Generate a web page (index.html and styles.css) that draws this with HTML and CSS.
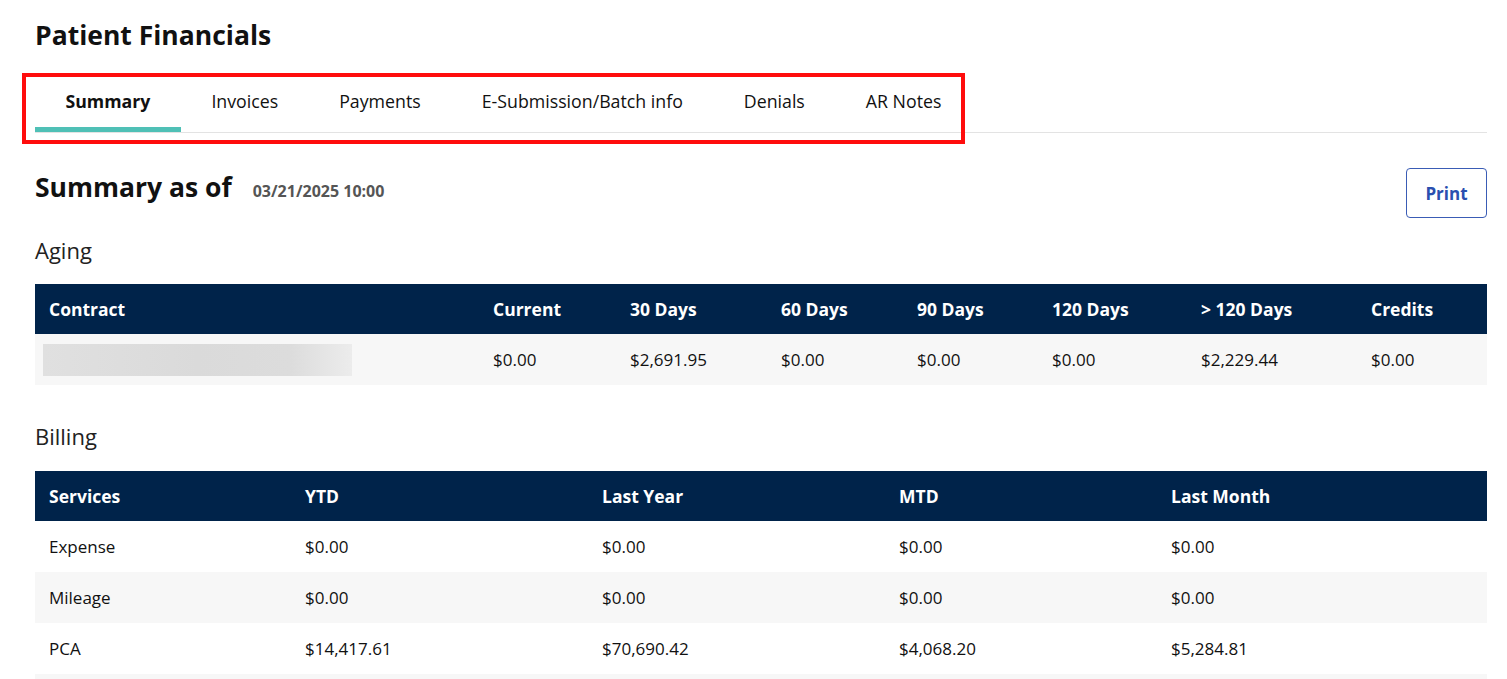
FILE: index.html
```html
<!DOCTYPE html>
<html lang="en">
<head>
<meta charset="utf-8">
<title>Patient Financials</title>
<link rel="stylesheet" href="styles.css">
</head>
<body>
<div class="page">
  <h1 class="title">Patient Financials</h1>
  <nav class="tabs">
    <ul class="tab-list">
      <li class="tab active">Summary</li>
      <li class="tab">Invoices</li>
      <li class="tab">Payments</li>
      <li class="tab">E-Submission/Batch info</li>
      <li class="tab">Denials</li>
      <li class="tab">AR Notes</li>
    </ul>
    <div class="highlight"></div>
  </nav>

  <div class="summary-head">
    <h2 class="summary-title">Summary as of <span class="summary-date">03/21/2025 10:00</span></h2>
    <button class="print-btn">Print</button>
  </div>

  <h3 class="section-title">Aging</h3>
  <table class="grid aging">
    <thead>
      <tr>
        <th class="c-contract">Contract</th>
        <th class="c-current">Current</th>
        <th class="c-30">30 Days</th>
        <th class="c-60">60 Days</th>
        <th class="c-90">90 Days</th>
        <th class="c-120">120 Days</th>
        <th class="c-120p">&gt; 120 Days</th>
        <th class="c-credits">Credits</th>
      </tr>
    </thead>
    <tbody>
      <tr class="shaded">
        <td class="blur-cell"><div class="blurred"></div></td>
        <td>$0.00</td>
        <td>$2,691.95</td>
        <td>$0.00</td>
        <td>$0.00</td>
        <td>$0.00</td>
        <td>$2,229.44</td>
        <td>$0.00</td>
      </tr>
    </tbody>
  </table>

  <h3 class="section-title billing-title">Billing</h3>
  <table class="grid billing">
    <thead>
      <tr>
        <th class="b-services">Services</th>
        <th class="b-ytd">YTD</th>
        <th class="b-ly">Last Year</th>
        <th class="b-mtd">MTD</th>
        <th class="b-lm">Last Month</th>
      </tr>
    </thead>
    <tbody>
      <tr><td>Expense</td><td>$0.00</td><td>$0.00</td><td>$0.00</td><td>$0.00</td></tr>
      <tr class="shaded"><td>Mileage</td><td>$0.00</td><td>$0.00</td><td>$0.00</td><td>$0.00</td></tr>
      <tr><td>PCA</td><td>$14,417.61</td><td>$70,690.42</td><td>$4,068.20</td><td>$5,284.81</td></tr>
      <tr class="shaded"><td>&nbsp;</td><td></td><td></td><td></td><td></td></tr>
    </tbody>
  </table>
</div>
</body>
</html>
```

FILE: styles.css
```css
* { box-sizing: border-box; }
html, body { margin: 0; padding: 0; background: #fff; }
body {
  font-family: "Open Sans", "Noto Sans", sans-serif;
  color: #111;
  font-size: 17px;
  overflow: hidden;
}
.page {
  padding: 14px 20px 0 35px;
}
.title {
  margin: 0;
  font-size: 26.5px;
  font-weight: 700;
  line-height: 42px;
  color: #111;
}
.tabs {
  position: relative;
  margin-top: 21px;
  border-bottom: 1px solid #e3e3e3;
}
.tab-list {
  display: flex;
  list-style: none;
  margin: 0;
  padding: 0;
}
.tab {
  padding: 0 30.5px;
  height: 55px;
  line-height: 48px;
  font-size: 17.75px;
  color: #111;
  border-bottom: 5px solid transparent;
}
.tab.active {
  font-weight: 700;
  font-size: 17.7px;
  border-bottom-color: #4fc0b6;
}
.highlight {
  position: absolute;
  left: -13px;
  top: -4px;
  width: 943px;
  height: 71px;
  border: 4px solid #ff0d0d;
  pointer-events: none;
}
.summary-head {
  display: flex;
  justify-content: space-between;
  align-items: flex-start;
  margin-top: 35px;
}
.summary-title {
  margin: 0;
  font-size: 26.5px;
  font-weight: 700;
  line-height: 38px;
}
.summary-date {
  font-size: 16px;
  color: #555;
  margin-left: 14px;
}
.print-btn {
  font-family: inherit;
  font-size: 17px;
  font-weight: 700;
  color: #2a4faf;
  background: #fff;
  border: 1px solid #3a5cb5;
  border-radius: 4px;
  width: 81px;
  height: 50px;
  padding: 0;
}
.section-title {
  margin: 17px 0 0;
  font-size: 22px;
  font-weight: 400;
  line-height: 30px;
  color: #222;
}
.billing-title { margin-top: 36px; }
.grid {
  width: 100%;
  border-collapse: collapse;
  table-layout: fixed;
  margin-top: 19px;
}
.billing { margin-top: 20px; }
.grid th {
  background: #00234a;
  color: #fff;
  font-weight: 700;
  text-align: left;
  height: 50px;
  padding: 0 14px;
  font-size: 17.5px;
}
.grid td {
  height: 51px;
  padding: 0 14px;
  text-align: left;
  font-size: 17px;
  color: #111;
}
.shaded td { background: #f7f7f7; }
.c-contract { width: 444px; }
.c-current { width: 137px; }
.c-30 { width: 151px; }
.c-60 { width: 136px; }
.c-90 { width: 135px; }
.c-120 { width: 149px; }
.c-120p { width: 170px; }
.c-credits { width: 130px; }
.blur-cell { padding: 0 8px !important; }
.blurred {
  width: 309px;
  height: 32px;
  background: linear-gradient(90deg, #e0e0e0 0%, #dadada 50%, #dcdcdc 80%, #ececec 100%);
  filter: blur(0.5px);
}
.b-services { width: 256px; }
.b-ytd { width: 297px; }
.b-ly { width: 297px; }
.b-mtd { width: 272px; }
.b-lm { width: 330px; }
```
